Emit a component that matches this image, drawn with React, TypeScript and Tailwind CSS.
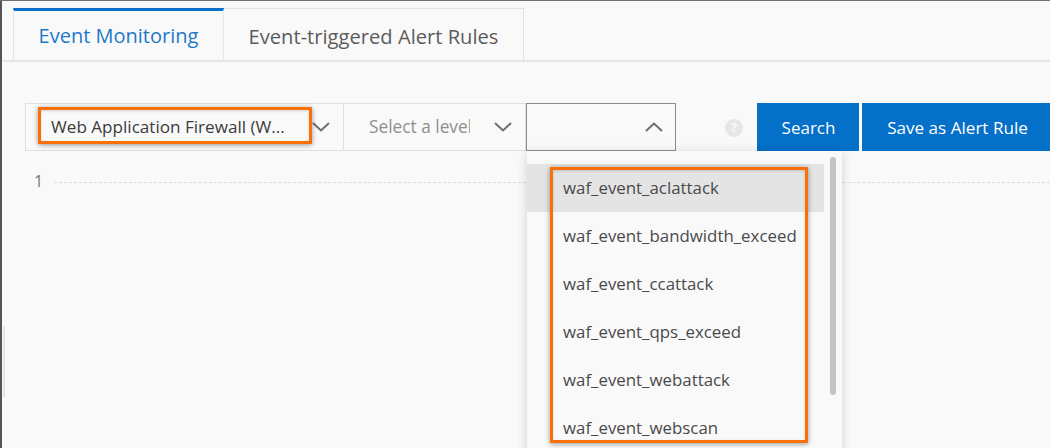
import React from "react";

const font = { fontFamily: '"Open Sans", "Noto Sans", sans-serif' };

function Chevron({ up = false, color = "#6e6e6e" }: { up?: boolean; color?: string }) {
  return (
    <svg width="18" height="10" viewBox="0 0 18 10" fill="none">
      <path d={up ? "M1 9 L9 1.5 L17 9" : "M1 1 L9 8.5 L17 1"} stroke={color} strokeWidth="2" />
    </svg>
  );
}

const items = [
  "waf_event_aclattack",
  "waf_event_bandwidth_exceed",
  "waf_event_ccattack",
  "waf_event_qps_exceed",
  "waf_event_webattack",
  "waf_event_webscan",
];

export default function App() {
  return (
    <div
      className="relative h-[448px] w-[1050px] overflow-hidden bg-[#f9f9f9] pt-[8px] text-[#4a4a4a]"
      style={font}
    >
      <div className="absolute left-0 top-0 h-full w-[2px] bg-[#555555]" />
      <div className="absolute left-0 top-0 h-[1px] w-full bg-[#707070]" />
      <div className="absolute left-[3px] top-[326px] h-[71px] w-[2px] bg-[#e4e4e4]" />

      {/* Tabs */}
      <div className="flex h-[54px] border-b-2 border-[#e6e6e6] pl-[13px]">
        <div className="flex h-[54px] w-[211px] items-center justify-center border-x border-[#e6e6e6] border-t-[3px] border-t-[#0a70c9] pb-[1px] text-[20px] text-[#1f78c8]">
          Event Monitoring
        </div>
        <div className="flex h-[52px] w-[300px] items-center justify-center border-r border-t border-[#e2e2e2] pt-[3px] text-[20.15px] text-[#5c5c5c]">
          Event-triggered Alert Rules
        </div>
      </div>

      {/* Toolbar */}
      <div className="mt-[41px] flex h-[48px] pl-[25px]">
        <div className="flex w-[319px] items-center justify-between border border-[#e0e0e0] pl-[25px] pr-[13px] text-[17.1px] text-[#3c3c3c]">
          <span>Web Application Firewall (W...</span>
          <Chevron />
        </div>
        <div className="flex w-[182px] items-center justify-between border-y border-r border-[#e0e0e0] pl-[25px] pr-[13px] text-[17.3px] text-[#8f8f8f]">
          <span className="w-[101px] overflow-hidden whitespace-nowrap">Select a level</span>
          <Chevron />
        </div>
        <div className="flex w-[150px] items-center justify-end border border-[#8c8c8c] pr-[12px]">
          <Chevron up />
        </div>
        <div className="flex w-[81px] items-center justify-end pr-[14px] pt-[1px]">
          <div className="flex h-[18px] w-[18px] items-center justify-center rounded-full bg-[#e6e6e6] text-[12px] font-bold text-[#fafafa]">
            ?
          </div>
        </div>
        <div className="flex w-[102px] items-center justify-center bg-[#0470c8] pl-[1px] pt-[1px] text-[17px] text-white">
          Search
        </div>
        <div className="ml-[3px] flex w-[188px] items-center justify-center bg-[#0470c8] pl-[3px] pt-[1px] text-[17.1px] text-white">
          Save as Alert Rule
        </div>
      </div>

      {/* Chart row */}
      <div className="mt-[20px] flex items-center pl-[34px]">
        <span className="w-[20px] text-[16px] leading-[20px] text-[#777777]">1</span>
        <div className="mt-[3px] flex-1 border-t border-dashed border-[#dcdcdc]" />
      </div>

      {/* Dropdown */}
      <div className="absolute left-[527px] top-[151px] h-[310px] w-[315px] bg-[#f9f9f9] pt-[13px] shadow-[0_2px_10px_rgba(0,0,0,0.16)]">
        {items.map((t, i) => (
          <div
            key={t}
            className={`flex h-[48px] w-[297px] items-center pl-[36px] text-[16.85px] text-[#4a4a4a] ${
              i === 0 ? "bg-[#e4e4e4]" : ""
            }`}
          >
            {t}
          </div>
        ))}
        <div className="absolute left-[303px] top-[6px] h-[238px] w-[6px] rounded-full bg-[#c4c4c4]" />
      </div>

      {/* Annotations */}
      <div className="absolute left-[38px] top-[107px] h-[37px] w-[274px] border-[3px] border-[#f96f0a] shadow-[0_1px_5px_rgba(0,0,0,0.4),inset_0_1px_3px_rgba(0,0,0,0.15)]" />
      <div className="absolute left-[550px] top-[167px] h-[276px] w-[258px] border-[3px] border-[#f96f0a] shadow-[0_1px_5px_rgba(0,0,0,0.4),inset_0_1px_3px_rgba(0,0,0,0.15)]" />
    </div>
  );
}
